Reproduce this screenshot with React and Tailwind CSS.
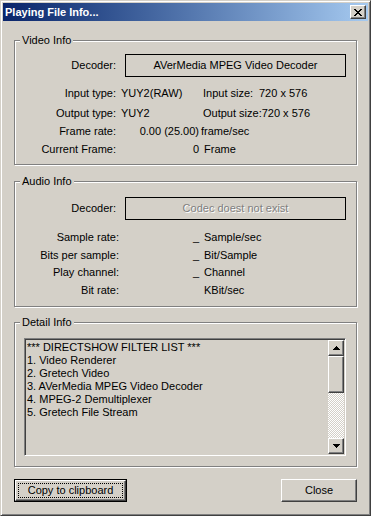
import React from "react";

const raised =
  "border border-t-white border-l-white border-r-[#404040] border-b-[#404040] shadow-[inset_-1px_-1px_0_#808080]";

const GroupBox = ({ title, className, children }) => (
  <div
    className={
      "relative border border-[#808080] shadow-[inset_1px_1px_0_#fff,1px_1px_0_#fff] " +
      className
    }
  >
    <span className="absolute left-[5px] -top-[8px] px-[2px] leading-[14px] bg-[#d4d0c8]">
      {title}
    </span>
    {children}
  </div>
);

const CloseX = () => (
  <svg width="8" height="7" viewBox="0 0 8 7" shapeRendering="crispEdges">
    <path
      fill="#000"
      d="M0 0h2v1h-2zM6 0h2v1h-2zM1 1h2v1h-2zM5 1h2v1h-2zM2 2h4v1h-4zM3 3h2v1h-2zM2 4h4v1h-4zM1 5h2v1h-2zM5 5h2v1h-2zM0 6h2v1h-2zM6 6h2v1h-2z"
    />
  </svg>
);

const Arrow = ({ up }) => (
  <svg width="7" height="4" viewBox="0 0 7 4" shapeRendering="crispEdges">
    {up ? (
      <path fill="#000" d="M3 0h1v1h-1zM2 1h3v1h-3zM1 2h5v1h-5zM0 3h7v1h-7z" />
    ) : (
      <path fill="#000" d="M0 0h7v1h-7zM1 1h5v1h-5zM2 2h3v1h-3zM3 3h1v1h-1z" />
    )}
  </svg>
);

const filters = [
  "*** DIRECTSHOW FILTER LIST ***",
  "1. Video Renderer",
  "2. Gretech Video",
  "3. AVerMedia MPEG Video Decoder",
  "4. MPEG-2 Demultiplexer",
  "5. Gretech File Stream",
];

export default function App() {
  return (
    <div className="w-[371px] h-[516px] bg-[#d4d0c8] border border-t-[#d4d0c8] border-l-[#d4d0c8] border-r-[#404040] border-b-[#404040] shadow-[inset_1px_1px_0_#fff,inset_-1px_-1px_0_#808080] p-[2px] flex flex-col font-['Liberation_Sans',Arial,sans-serif] text-[11px] text-black">
      {/* title bar */}
      <div className="h-[18px] shrink-0 flex items-center justify-between pl-[2px] pr-[2px] bg-linear-to-r from-[#0a246a] to-[#a6caf0]">
        <span className="text-white font-bold text-[11px] leading-[14px]">
          Playing File Info...
        </span>
        <div className={"w-[16px] h-[14px] flex items-center justify-center bg-[#d4d0c8] " + raised}>
          <CloseX />
        </div>
      </div>

      <div className="flex flex-col px-[11px]">
        {/* Video Info */}
        <GroupBox title="Video Info" className="mt-[19px] h-[125px]">
          <div className="flex items-center mt-[13px]">
            <span className="w-[101px] text-right">Decoder:</span>
            <div className="ml-[9px] w-[221px] h-[23px] border border-black flex items-center justify-center">
              AVerMedia MPEG Video Decoder
            </div>
          </div>
          <div className="flex leading-[14px] mt-[9px]">
            <span className="w-[101px] text-right">Input type:</span>
            <span className="ml-[5px] w-[82px]">YUY2(RAW)</span>
            <span className="w-[56px]">Input size:</span>
            <span>720 x 576</span>
          </div>
          <div className="flex leading-[14px] mt-[6px]">
            <span className="w-[101px] text-right">Output type:</span>
            <span className="ml-[5px] w-[82px]">YUY2</span>
            <span>Output size:720 x 576</span>
          </div>
          <div className="flex leading-[14px] mt-[4px]">
            <span className="w-[101px] text-right">Frame rate:</span>
            <span className="w-[83px] text-right">0.00 (25.00)</span>
            <span className="ml-[2px]">frame/sec</span>
          </div>
          <div className="flex leading-[14px] mt-[4px]">
            <span className="w-[101px] text-right">Current Frame:</span>
            <span className="w-[83px] text-right">0</span>
            <span className="ml-[5px]">Frame</span>
          </div>
        </GroupBox>

        {/* Audio Info */}
        <GroupBox title="Audio Info" className="mt-[16px] h-[126px]">
          <div className="flex items-center mt-[15px]">
            <span className="w-[101px] text-right">Decoder:</span>
            <div className="ml-[9px] w-[221px] h-[23px] border border-black flex items-center justify-center text-[#808080] [text-shadow:1px_1px_0_#fff]">
              Codec doest not exist
            </div>
          </div>
          <div className="flex leading-[14px] mt-[10px]">
            <span className="w-[104px] text-right">Sample rate:</span>
            <span className="w-[80px] text-right">_</span>
            <span className="ml-[5px]">Sample/sec</span>
          </div>
          <div className="flex leading-[14px] mt-[4px]">
            <span className="w-[104px] text-right">Bits per sample:</span>
            <span className="w-[80px] text-right">_</span>
            <span className="ml-[5px]">Bit/Sample</span>
          </div>
          <div className="flex leading-[14px] mt-[3px]">
            <span className="w-[104px] text-right">Play channel:</span>
            <span className="w-[80px] text-right">_</span>
            <span className="ml-[5px]">Channel</span>
          </div>
          <div className="flex leading-[14px] mt-[4px]">
            <span className="w-[104px] text-right">Bit rate:</span>
            <span className="w-[80px] text-right"></span>
            <span className="ml-[5px]">KBit/sec</span>
          </div>
        </GroupBox>

        {/* Detail Info */}
        <GroupBox title="Detail Info" className="mt-[15px] h-[145px]">
          <div className="ml-[9px] mt-[15px] w-[322px] h-[118px] flex p-[1px] border border-t-[#808080] border-l-[#808080] border-r-white border-b-white shadow-[inset_1px_1px_0_#404040,inset_-1px_-1px_0_#d4d0c8]">
            <div className="flex-1 pl-[1px] pt-[1px] leading-[13px]">
              {filters.map((f) => (
                <div key={f}>{f}</div>
              ))}
            </div>
            <div className="w-[16px] flex flex-col">
              <div className={"h-[16px] flex items-center justify-center " + raised}>
                <Arrow up />
              </div>
              <div className={"h-[37px] " + raised}></div>
              <div className="flex-1 bg-[repeating-conic-gradient(#fff_0_25%,#d4d0c8_0_50%)] bg-[length:2px_2px]"></div>
              <div className={"h-[16px] flex items-center justify-center " + raised}>
                <Arrow />
              </div>
            </div>
          </div>
        </GroupBox>

        {/* buttons */}
        <div className="flex justify-between mt-[12px]">
          <div className="w-[113px] h-[23px] border border-black flex">
            <div className={"flex-1 flex p-[2px] " + raised}>
              <span className="flex-1 border border-dotted border-black flex items-center justify-center">
                Copy to clipboard
              </span>
            </div>
          </div>
          <div className={"w-[76px] h-[23px] flex items-center justify-center " + raised}>
            Close
          </div>
        </div>
      </div>
    </div>
  );
}
